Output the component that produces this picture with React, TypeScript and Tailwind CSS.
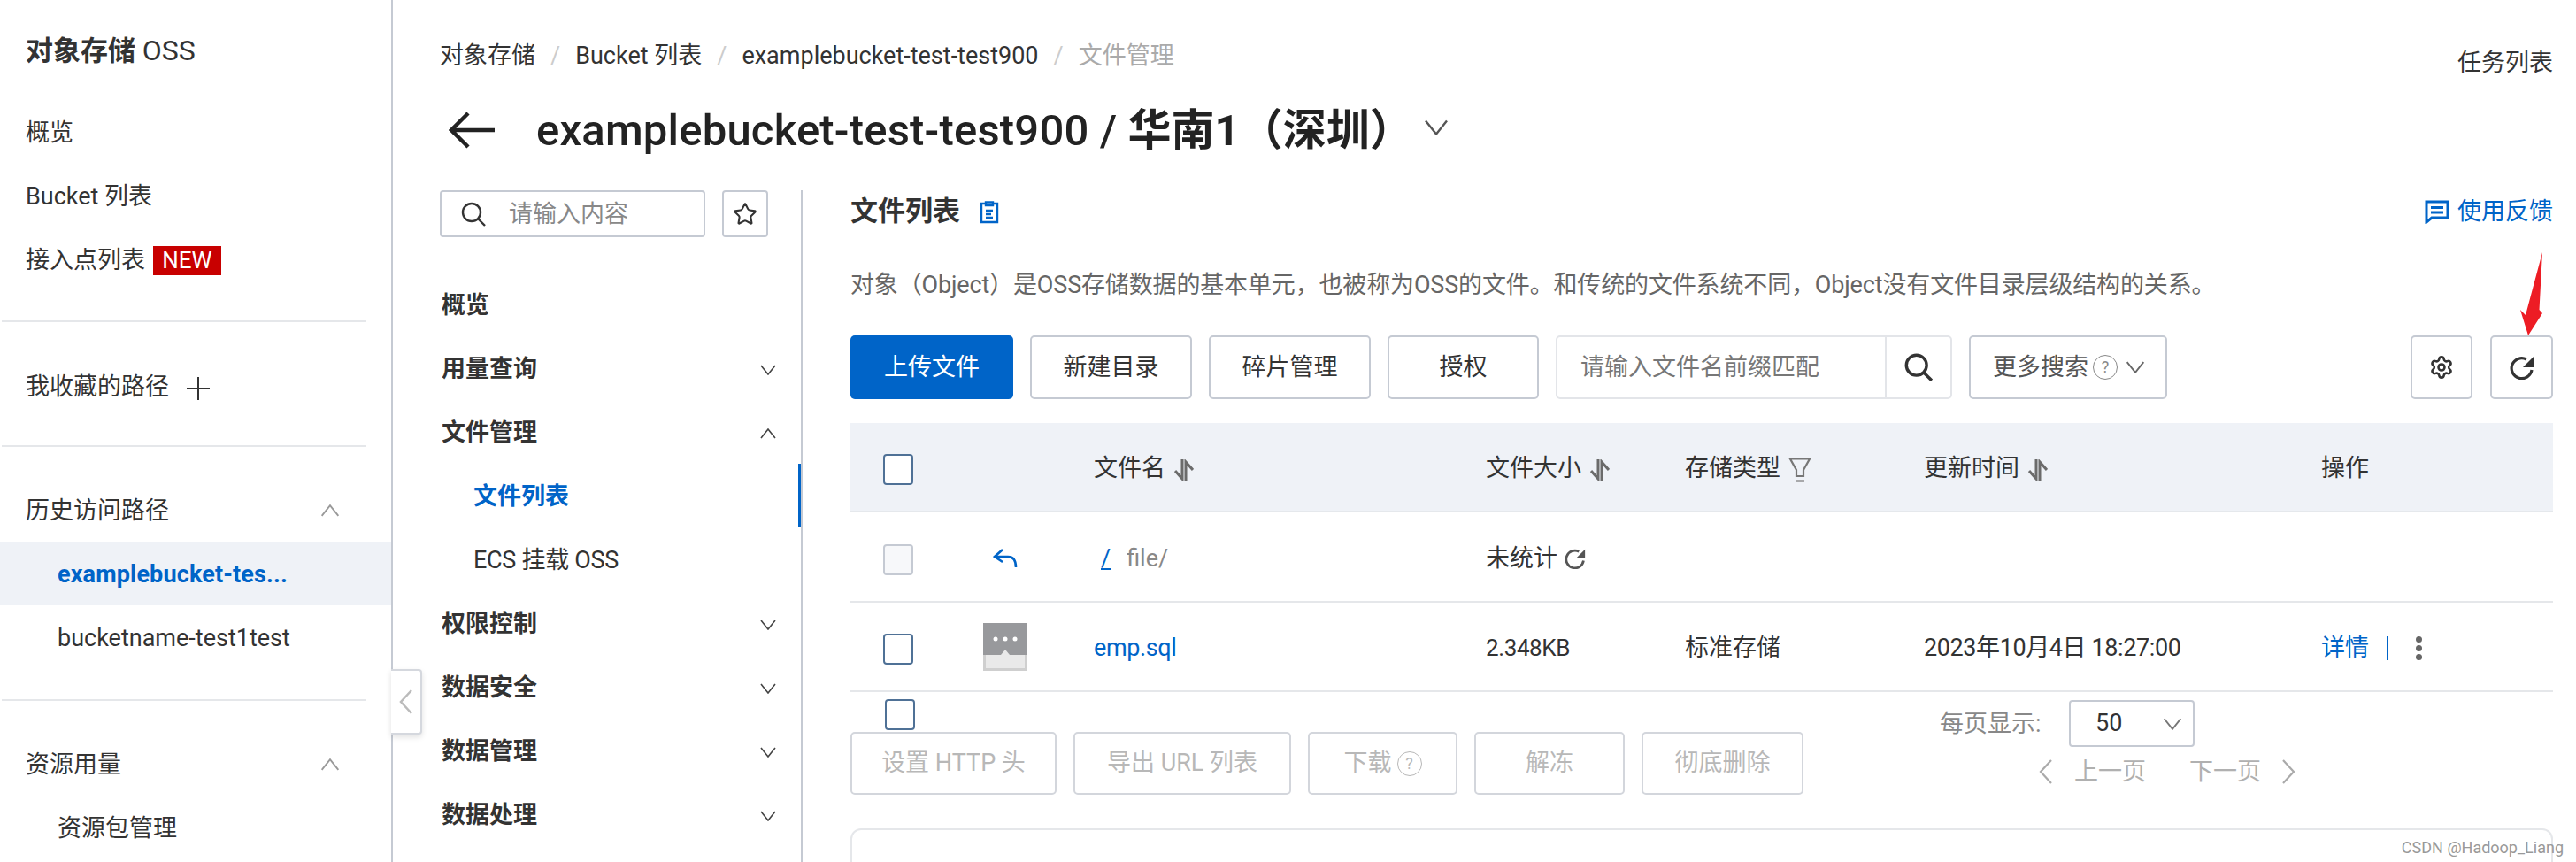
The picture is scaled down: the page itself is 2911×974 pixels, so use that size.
import { Settings, Star } from 'lucide-react';

const Chevron = ({ up = false, className = '' }: { up?: boolean; className?: string }) => (
  <svg width="18" height="12" viewBox="0 0 18 12" fill="none" className={className}>
    <path d={up ? 'M1 11 L9 1 L17 11' : 'M1 1 L9 11 L17 1'} stroke="currentColor" strokeWidth="1.6" />
  </svg>
);

const SearchIcon = ({ size, sw }: { size: number; sw: number }) => (
  <svg width={size} height={size} viewBox="0 0 28 28" fill="none" stroke="#333" strokeWidth={sw}>
    <circle cx="12" cy="12" r="10" />
    <path d="M19 19 L27 27" />
  </svg>
);

const SortIcon = () => (
  <svg width="22" height="25" viewBox="0 0 22 25" fill="none" stroke="#6b6b6b" strokeWidth="3" className="ml-[10px] mt-[3px]">
    <path d="M9 0 V22 L1 13" />
    <path d="M13 25 V3 L21 12" />
  </svg>
);

const FilterIcon = () => (
  <svg width="26" height="28" viewBox="0 0 26 28" fill="none" stroke="#777" strokeWidth="2.2" className="ml-[9px] mt-[3px]">
    <path d="M2 1.5 H24 L17 14 V21 H9 V14 Z" />
    <path d="M8 26.5 H18" />
  </svg>
);

const RefreshIcon = ({ size, color }: { size: number; color: string }) => (
  <svg width={size} height={size} viewBox="0 0 28 28" fill="none">
    <path d="M25 17 A11.5 11.5 0 1 1 19 5" stroke={color} strokeWidth="3.2" />
    <path d="M27 2 V14 H15 Z" fill={color} />
  </svg>
);

const Help = () => (
  <span className="flex h-[28px] w-[28px] items-center justify-center rounded-full border-[1.5px] border-current text-[18px] leading-none">?</span>
);

const SideItem = ({ children, indent = false, active = false }: { children: React.ReactNode; indent?: boolean; active?: boolean }) => (
  <div className={`flex h-[72px] items-center pt-[2px] text-[27px] ${indent ? 'pl-[65px]' : 'pl-[29px]'} ${active ? 'bg-[#eff2f7] font-bold tracking-[0.15px] text-[#0064c8]' : ''}`}>
    {children}
  </div>
);

const SideDivider = ({ className }: { className: string }) => <div className={`ml-[2px] h-[2px] w-[412px] bg-[#e5e7ea] ${className}`} />;

const NavItem = ({ label, chevron, up = false }: { label: string; chevron?: boolean; up?: boolean }) => (
  <div className="flex h-[72px] items-center justify-between pl-[2px] pr-[28px] pt-[3px] text-[27px] font-bold">
    <span>{label}</span>
    {chevron && <Chevron up={up} className="text-[#444]" />}
  </div>
);

const Btn = ({ children, w, disabled = false }: { children: React.ReactNode; w: string; disabled?: boolean }) => (
  <div className={`flex h-full items-center justify-center gap-[6px] rounded-[5px] border-2 text-[27px] ${w} ${disabled ? 'border-[#d3d6dc] text-[#b8b8b8]' : 'border-[#c5cad3]'}`}>
    {children}
  </div>
);

const Check = ({ disabled = false }: { disabled?: boolean }) => (
  <div className={`h-[35px] w-[34px] rounded-[4px] border-2 ${disabled ? 'border-[#c5cad3] bg-[#f7f8fa]' : 'border-[#4f7196] bg-white'}`} />
);

const rowGrid = 'grid grid-cols-[150px_125px_443px_225px_270px_449px_1fr] items-center pt-[4px] text-[27px]';

export default function App() {
  return (
    <div className="relative flex h-[974px] w-[2911px] overflow-hidden bg-white text-[#333] [font-family:'Roboto','Noto_Sans_CJK_SC',sans-serif]">
      {/* left sidebar */}
      <aside className="relative w-[444px] shrink-0 border-r-2 border-[#c5cad3]">
        <div className="pl-[29px] pt-[36px] text-[31px] font-bold leading-[42px]">
          对象存储 <span className="text-[32px] font-normal">OSS</span>
        </div>
        <div className="mt-[34px]">
          <SideItem>概览</SideItem>
          <SideItem>Bucket 列表</SideItem>
          <SideItem>
            接入点列表
            <span className="ml-[9px] flex h-[33px] w-[77px] items-center justify-center bg-[#c80000] text-[26px] text-white">NEW</span>
          </SideItem>
        </div>
        <SideDivider className="mt-[33px]" />
        <div className="mt-[36px]">
          <SideItem>
            我收藏的路径
            <svg width="26" height="26" viewBox="0 0 26 26" stroke="#333" strokeWidth="2" className="ml-[20px] mt-[4px]">
              <path d="M13 0 V26 M0 13 H26" />
            </svg>
          </SideItem>
        </div>
        <SideDivider className="mt-[31px]" />
        <div className="mt-[35px]">
          <div className="flex h-[72px] items-center justify-between pl-[29px] pr-[56px] pt-[2px] text-[27px]">
            历史访问路径
            <Chevron up className="h-[14px] w-[26px] text-[#999]" />
          </div>
          <SideItem indent active>examplebucket-tes...</SideItem>
          <SideItem indent>bucketname-test1test</SideItem>
        </div>
        <SideDivider className="mt-[34px]" />
        <div className="mt-[35px]">
          <div className="flex h-[72px] items-center justify-between pl-[29px] pr-[56px] pt-[2px] text-[27px]">
            资源用量
            <Chevron up className="h-[14px] w-[26px] text-[#999]" />
          </div>
          <SideItem indent>资源包管理</SideItem>
        </div>
        {/* collapse handle */}
        <div className="absolute left-full top-[756px] z-10 flex h-[74px] w-[35px] items-center justify-center rounded-r-[4px] border-2 border-l-0 border-[#d5d8de] bg-white shadow-[0_3px_6px_rgba(0,0,0,0.12)]">
          <svg width="16" height="28" viewBox="0 0 16 28" fill="none" stroke="#bbb" strokeWidth="2.5">
            <path d="M14 1 L2 14 L14 27" />
          </svg>
        </div>
      </aside>

      {/* right content */}
      <div className="min-w-0 flex-1 pl-[53px] pr-[26px]">
        <div className="flex h-[117px] items-start justify-between pt-[45px]">
          <div className="flex h-[36px] items-center text-[27px]">
            <span>对象存储</span>
            <span className="mx-[17px] text-[#ccc]">/</span>
            <span>Bucket 列表</span>
            <span className="mx-[17px] text-[#ccc]">/</span>
            <span>examplebucket-test-test900</span>
            <span className="mx-[17px] text-[#ccc]">/</span>
            <span className="text-[#aaa]">文件管理</span>
          </div>
          <div className="mt-[8px] text-[27px] leading-[36px]">任务列表</div>
        </div>

        <div className="flex h-[60px] items-center">
          <svg width="52" height="42" viewBox="0 0 52 42" fill="none" stroke="#222" strokeWidth="4.5" className="ml-[10px]">
            <path d="M22 2 L3 21 L22 40 M3 21 H52" />
          </svg>
          <h1 className="ml-[47px] text-[49px] font-bold leading-none text-[#222]">
            <span className="font-medium tracking-[0.2px]">examplebucket-test-test900 / </span>华南1（深圳）
          </h1>
          <Chevron className="ml-[8px] mt-[-6px] h-[18px] w-[36px] text-[#555]" />
        </div>

        <div className="mt-[38px] flex">
          {/* bucket nav */}
          <nav className="h-[760px] w-[410px] shrink-0 border-r-2 border-[#c5cad3]">
            <div className="flex h-[53px]">
              <div className="flex w-[300px] items-center rounded-[4px] border-2 border-[#c5cad3] pl-[22px] text-[27px] text-[#888]">
                <SearchIcon size={28} sw={2.4} />
                <span className="ml-[26px] pt-[2px]">请输入内容</span>
              </div>
              <div className="ml-[19px] flex w-[52px] items-center justify-center rounded-[4px] border-2 border-[#c5cad3]">
                <Star size={28} strokeWidth={1.8} />
              </div>
            </div>
            <div className="mt-[40px]">
              <NavItem label="概览" />
              <NavItem label="用量查询" chevron />
              <NavItem label="文件管理" chevron up />
              <div className="flex h-[72px] items-center border-r-[3px] border-[#0064c8] pl-[38px] pt-[3px] text-[27px] font-bold text-[#0064c8]">文件列表</div>
              <div className="flex h-[72px] items-center pl-[38px] pt-[3px] text-[27px] tracking-[-0.3px]">ECS 挂载 OSS</div>
              <NavItem label="权限控制" chevron />
              <NavItem label="数据安全" chevron />
              <NavItem label="数据管理" chevron />
              <NavItem label="数据处理" chevron />
            </div>
          </nav>

          {/* file list */}
          <main className="min-w-0 flex-1 pl-[54px]">
            <div className="flex h-[46px] items-center justify-between pt-[3px]">
              <div className="flex items-center">
                <span className="text-[31px] font-bold">文件列表</span>
                <svg width="22" height="26" viewBox="0 0 22 26" fill="none" stroke="#0064c8" strokeWidth="2.4" className="ml-[22px]">
                  <path d="M7 3 H2 V24 H20 V3 H15 M7 1.5 H15 V5 H7 Z M7 11 H15 M7 15 H13 M7 19 H15" />
                </svg>
              </div>
              <div className="flex items-center text-[27px] text-[#0064c8]">
                <svg width="28" height="27" viewBox="0 0 28 27" fill="none" stroke="#0064c8" strokeWidth="3" className="mr-[9px]">
                  <path d="M2 25 V2 H26 V20 H8 Z" />
                  <path d="M7 8.5 H21 M7 14 H21" />
                </svg>
                使用反馈
              </div>
            </div>
            <p className="mt-[41px] h-[40px] whitespace-nowrap text-[27px] leading-[40px] tracking-[-0.15px] text-[#666]">
              对象（Object）是OSS存储数据的基本单元，也被称为OSS的文件。和传统的文件系统不同，Object没有文件目录层级结构的关系。
            </p>

            <div className="mt-[37px] flex h-[72px]">
              <div className="flex w-[184px] items-center justify-center rounded-[5px] bg-[#0064c8] text-[27px] text-white">上传文件</div>
              <div className="ml-[19px] flex h-full gap-[19px]">
                <Btn w="w-[183px]">新建目录</Btn>
                <Btn w="w-[183px]">碎片管理</Btn>
                <Btn w="w-[171px]">授权</Btn>
              </div>
              <div className="ml-[19px] flex w-[448px] rounded-[5px] border-2 border-[#e3e5e9]">
                <div className="flex flex-1 items-center pl-[26px] text-[27px] text-[#777]">请输入文件名前缀匹配</div>
                <div className="flex w-[74px] items-center justify-center border-l-2 border-[#e3e5e9]">
                  <SearchIcon size={32} sw={3} />
                </div>
              </div>
              <div className="ml-[19px] flex w-[224px] items-center rounded-[5px] border-2 border-[#c5cad3] pl-[25px] text-[27px] text-[#555]">
                更多搜索
                <span className="ml-[5px] text-[#888]"><Help /></span>
                <Chevron className="ml-[7px] h-[14px] w-[26px] text-[#666]" />
              </div>
              <div className="ml-auto flex gap-[20px]">
                <div className="flex w-[70px] items-center justify-center rounded-[5px] border-2 border-[#c5cad3]">
                  <Settings size={28} strokeWidth={2.2} color="#333" />
                </div>
                <div className="flex w-[71px] items-center justify-center rounded-[5px] border-2 border-[#c5cad3]">
                  <RefreshIcon size={28} color="#333" />
                </div>
              </div>
            </div>

            {/* table */}
            <div className="mt-[27px]">
              <div className={`${rowGrid} h-[101px] border-b-2 border-[#e5e8ec] bg-[#eff2f7]`}>
                <div className="mt-[2px] pl-[37px]"><Check /></div>
                <div />
                <div className="flex items-center">文件名<SortIcon /></div>
                <div className="flex items-center">文件大小<SortIcon /></div>
                <div className="flex items-center">存储类型<FilterIcon /></div>
                <div className="flex items-center">更新时间<SortIcon /></div>
                <div>操作</div>
              </div>
              <div className={`${rowGrid} h-[102px] border-b-2 border-[#e5e7ea]`}>
                <div className="mt-[2px] pl-[37px]"><Check disabled /></div>
                <div className="flex w-[50px] justify-center">
                  <svg width="28" height="24" viewBox="0 0 28 24" fill="none" stroke="#0064c8" strokeWidth="2.6">
                    <path d="M11 2 L2 10 L11 16 M2 10 H17 C23 10 26 14 26 22" />
                  </svg>
                </div>
                <div className="flex items-center pl-[8px] text-[#888]">
                  <span className="mr-[18px] text-[#0064c8] underline">/</span>file/
                </div>
                <div className="flex items-center">
                  未统计
                  <span className="ml-[8px]"><RefreshIcon size={24} color="#555" /></span>
                </div>
              </div>
              <div className={`${rowGrid} h-[101px] border-b-2 border-[#e5e7ea]`}>
                <div className="mt-[2px] pl-[37px]"><Check /></div>
                <div className="mt-[-4px]">
                  <svg width="50" height="54" viewBox="0 0 50 54">
                    <rect width="50" height="54" fill="#cfcfcf" />
                    <rect x="3" y="36" width="44" height="15" fill="#e9e9e9" />
                    <rect width="50" height="36" fill="#98999c" />
                    <path d="M20 36 L25 30 L30 36 Z" fill="#e9e9e9" />
                    <circle cx="14" cy="18" r="2.5" fill="#fff" />
                    <circle cx="25" cy="18" r="2.5" fill="#fff" />
                    <circle cx="36" cy="18" r="2.5" fill="#fff" />
                  </svg>
                </div>
                <div className="tracking-[-0.4px] text-[#0064c8]">emp.sql</div>
                <div className="text-[26px] tracking-[-0.4px]">2.348KB</div>
                <div>标准存储</div>
                <div className="tracking-[-0.4px]">2023年10月4日 18:27:00</div>
                <div className="flex items-center text-[#0064c8]">
                  详情
                  <span className="ml-[20px] h-[27px] w-[2px] bg-[#0064c8]" />
                  <span className="ml-[31px] flex flex-col gap-[3px]">
                    <span className="h-[7px] w-[7px] rounded-full bg-[#666]" />
                    <span className="h-[7px] w-[7px] rounded-full bg-[#666]" />
                    <span className="h-[7px] w-[7px] rounded-full bg-[#666]" />
                  </span>
                </div>
              </div>
            </div>

            {/* footer actions and pager */}
            <div className="flex">
              <div className="w-[1231px] shrink-0">
                <div className="ml-[39px] mt-[8px]"><Check /></div>
                <div className="mt-[2px] flex h-[71px] gap-[19px]">
                  <Btn w="w-[233px]" disabled>设置 HTTP 头</Btn>
                  <Btn w="w-[246px]" disabled>导出 URL 列表</Btn>
                  <Btn w="w-[169px]" disabled>下载 <Help /></Btn>
                  <Btn w="w-[170px]" disabled>解冻</Btn>
                  <Btn w="w-[183px]" disabled>彻底删除</Btn>
                </div>
              </div>
              <div className="flex-1 pt-[9px] text-[27px]">
                <div className="flex h-[53px] items-center">
                  <span className="w-[146px] pt-[2px] text-[#888]">每页显示:</span>
                  <div className="flex h-full w-[142px] items-center justify-between rounded-[4px] border-2 border-[#c5cad3] pl-[28px] pr-[10px]">
                    50
                    <Chevron className="h-[14px] w-[26px] text-[#777]" />
                  </div>
                </div>
                <div className="mt-[10px] flex h-[36px] items-center pl-[112px] text-[#b0b0b0]">
                  <svg width="16" height="28" viewBox="0 0 16 28" fill="none" stroke="#aaa" strokeWidth="2.2">
                    <path d="M14 1 L2 14 L14 27" />
                  </svg>
                  <span className="ml-[24px]">上一页</span>
                  <span className="ml-[49px]">下一页</span>
                  <svg width="16" height="28" viewBox="0 0 16 28" fill="none" stroke="#aaa" strokeWidth="2.2" className="ml-[23px]">
                    <path d="M2 1 L14 14 L2 27" />
                  </svg>
                </div>
              </div>
            </div>

            <div className="mt-[38px] h-[120px] rounded-[12px] border-2 border-[#e5e7ea]" />
          </main>
        </div>
      </div>

      {/* red annotation arrow */}
      <svg width="40" height="104" viewBox="0 0 40 104" className="absolute left-[2840px] top-[280px]">
        <path d="M33 5 L29.5 70 L33 74 L17 99 L8 70 L14 76 Z" fill="#ed1c24" />
      </svg>
      <div className="absolute right-[14px] top-[944px] text-[18px] text-[#999]">CSDN @Hadoop_Liang</div>
    </div>
  );
}
